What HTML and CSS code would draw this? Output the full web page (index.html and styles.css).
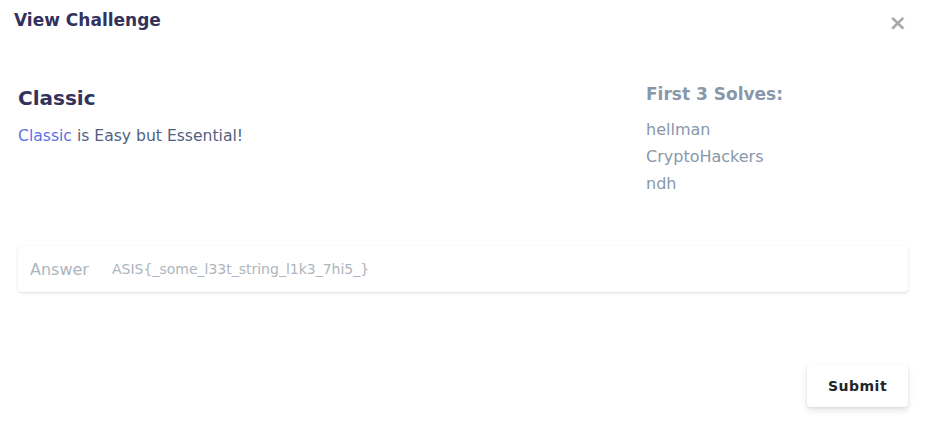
FILE: index.html
```html
<!DOCTYPE html>
<html>
<head>
<meta charset="utf-8">
<link rel="stylesheet" href="styles.css">
</head>
<body>
<div class="modal">
  <div class="modal-header">
    <h5 class="modal-title">View Challenge</h5>
    <span class="close">&times;</span>
  </div>
  <div class="modal-body">
    <div class="info">
      <div class="main">
        <h2 class="name">Classic</h2>
        <p class="desc"><span class="link">Classic</span> is Easy but Essential!</p>
      </div>
      <div class="solves">
        <h3 class="solves-title">First 3 Solves:</h3>
        <ul class="solver-list">
          <li>hellman</li>
          <li>CryptoHackers</li>
          <li>ndh</li>
        </ul>
      </div>
    </div>
    <div class="answer">
      <span class="answer-label">Answer</span>
      <span class="answer-input">ASIS{_some_l33t_string_l1k3_7hi5_}</span>
    </div>
    <div class="actions">
      <button class="submit">Submit</button>
    </div>
  </div>
</div>
</body>
</html>
```

FILE: styles.css
```css
* { box-sizing: border-box; }
html, body {
  margin: 0;
  padding: 0;
  background: #ffffff;
  font-family: "DejaVu Sans", sans-serif;
}
.modal {
  width: 926px;
  height: 424px;
  background: #fff;
}
.modal-header {
  display: flex;
  justify-content: space-between;
  align-items: flex-start;
  height: 43px;
  padding: 10px 19px 0 14px;
}
.modal-title {
  margin: 0;
  font-size: 17px;
  line-height: 21px;
  font-weight: bold;
  color: #32325d;
}
.close {
  margin-top: 1px;
  font-size: 22px;
  line-height: 24px;
  color: #a8a8a8;
  font-weight: bold;
}
.modal-body {
  padding: 40px 18px 0 18px;
}
.info {
  display: grid;
  grid-template-columns: 1fr 262px;
  height: 163px;
}
.name {
  margin: 0;
  font-size: 20px;
  line-height: 30px;
  font-weight: bold;
  color: #32325d;
}
.desc {
  margin: 11px 0 0;
  font-size: 15.6px;
  line-height: 24px;
  color: #525f7f;
}
.link { color: #5e72e4; }
.solves-title {
  margin: 0;
  font-size: 17px;
  line-height: 23px;
  font-weight: bold;
  color: #8898aa;
}
.solver-list {
  list-style: none;
  margin: 10px 0 0;
  padding: 0;
  font-size: 16px;
  line-height: 27px;
  color: #8898aa;
}
.answer {
  display: flex;
  align-items: center;
  height: 46px;
  border-radius: 4px;
  background: #fff;
  box-shadow: 0 1px 3px rgba(50,50,93,0.15), 0 1px 0 rgba(0,0,0,0.02);
  padding: 0 12px;
}
.answer-label {
  font-size: 16px;
  color: #adb5bd;
  width: 82px;
}
.answer-input {
  font-size: 14px;
  color: #adb5bd;
}
.actions {
  display: flex;
  justify-content: flex-end;
  margin-top: 72px;
}
.submit {
  font-family: "DejaVu Sans", sans-serif;
  font-weight: bold;
  font-size: 14px;
  letter-spacing: 0.5px;
  color: #212529;
  background: #fff;
  border: none;
  border-radius: 4px;
  width: 101px;
  height: 43px;
  box-shadow: 0 4px 6px rgba(50,50,93,0.11), 0 1px 3px rgba(0,0,0,0.08);
}
```
